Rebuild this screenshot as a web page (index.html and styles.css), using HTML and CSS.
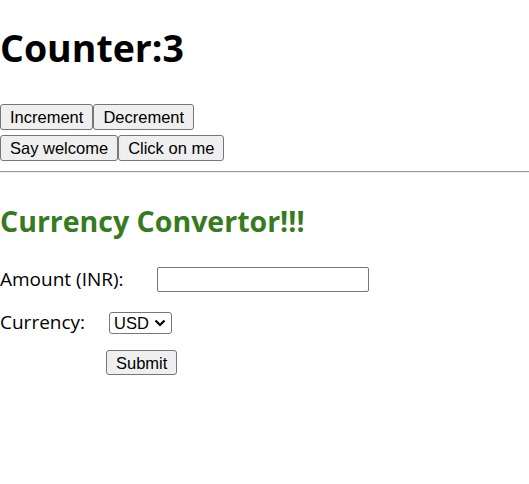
FILE: index.html
```html
<!DOCTYPE html>
<html lang="en">
<head>
<meta charset="utf-8">
<title>Counter</title>
<link rel="stylesheet" href="styles.css">
</head>
<body>
<div class="app">
  <h1 class="counter-title">Counter:3</h1>
  <div class="btn-row">
    <button class="btn">Increment</button><button class="btn">Decrement</button>
  </div>
  <div class="btn-row second">
    <button class="btn">Say welcome</button><button class="btn">Click on me</button>
  </div>
  <hr class="divider">
  <h2 class="conv-title">Currency Convertor!!!</h2>
  <form class="conv-form">
    <div class="form-row amount-row">
      <label class="lbl">Amount (INR):</label>
      <input class="amount-input" type="text">
    </div>
    <div class="form-row currency-row">
      <label class="lbl">Currency:</label>
      <select class="currency-select"><option>USD</option></select>
    </div>
    <div class="form-row submit-row">
      <button type="button" class="btn submit-btn">Submit</button>
    </div>
  </form>
</div>
</body>
</html>
```
FILE: styles.css
```css
html, body {
  margin: 0;
  padding: 0;
  background: #ffffff;
}
body {
  font-family: "Open Sans", "Noto Sans", sans-serif;
  font-size: 19px;
  color: #000;
}
.counter-title {
  margin: 0;
  padding-top: 24px;
  font-size: 37.5px;
  line-height: 48px;
  font-weight: 700;
}
.counter-title + .btn-row {
  margin-top: 32px;
}
.btn-row {
  display: flex;
}
.btn-row.second {
  margin-top: 5px;
}
.btn {
  font-family: "Liberation Sans", Arial, sans-serif;
  font-size: 16.5px;
  height: 26px;
  padding: 0 9px;
  border: 1px solid #767676;
  border-radius: 3px;
  background: #efefef;
  color: #000;
  line-height: 24px;
  margin: 0;
}
.divider {
  margin: 10px 0 0;
  border: 0;
  border-top: 1px solid #9a9a9a;
  border-bottom: 1px solid #eeeeee;
  height: 0;
}
.conv-title {
  margin: 0;
  padding-top: 28px;
  font-size: 28.5px;
  line-height: 40px;
  font-weight: 700;
  color: #377b21;
}
.conv-form {
  margin-top: 26px;
}
.form-row {
  display: flex;
  align-items: center;
}
.lbl {
  line-height: 25px;
}
.amount-input {
  margin-left: 33px;
  width: 212px;
  height: 25px;
  box-sizing: border-box;
  border: 1px solid #767676;
  border-radius: 2px;
  padding: 0 4px;
  font-size: 16px;
}
.currency-row {
  margin-top: 18px;
}
.currency-select {
  margin-left: 24px;
  width: 63px;
  height: 22px;
  box-sizing: border-box;
  appearance: none;
  -webkit-appearance: none;
  border: 1px solid #767676;
  border-radius: 3px;
  padding: 0 0 0 4px;
  font-family: "Liberation Sans", Arial, sans-serif;
  font-size: 16.5px;
  color: #000;
  background: #fff url("data:image/svg+xml;utf8,<svg xmlns='http://www.w3.org/2000/svg' width='12' height='8' viewBox='0 0 12 8'><path d='M1.5 1.5 L6 6 L10.5 1.5' fill='none' stroke='black' stroke-width='2.2'/></svg>") no-repeat right 5px center;
}
.submit-row {
  margin-top: 15px;
}
.submit-btn {
  margin-left: 106px;
  width: 71px;
  height: 25px;
}
```
